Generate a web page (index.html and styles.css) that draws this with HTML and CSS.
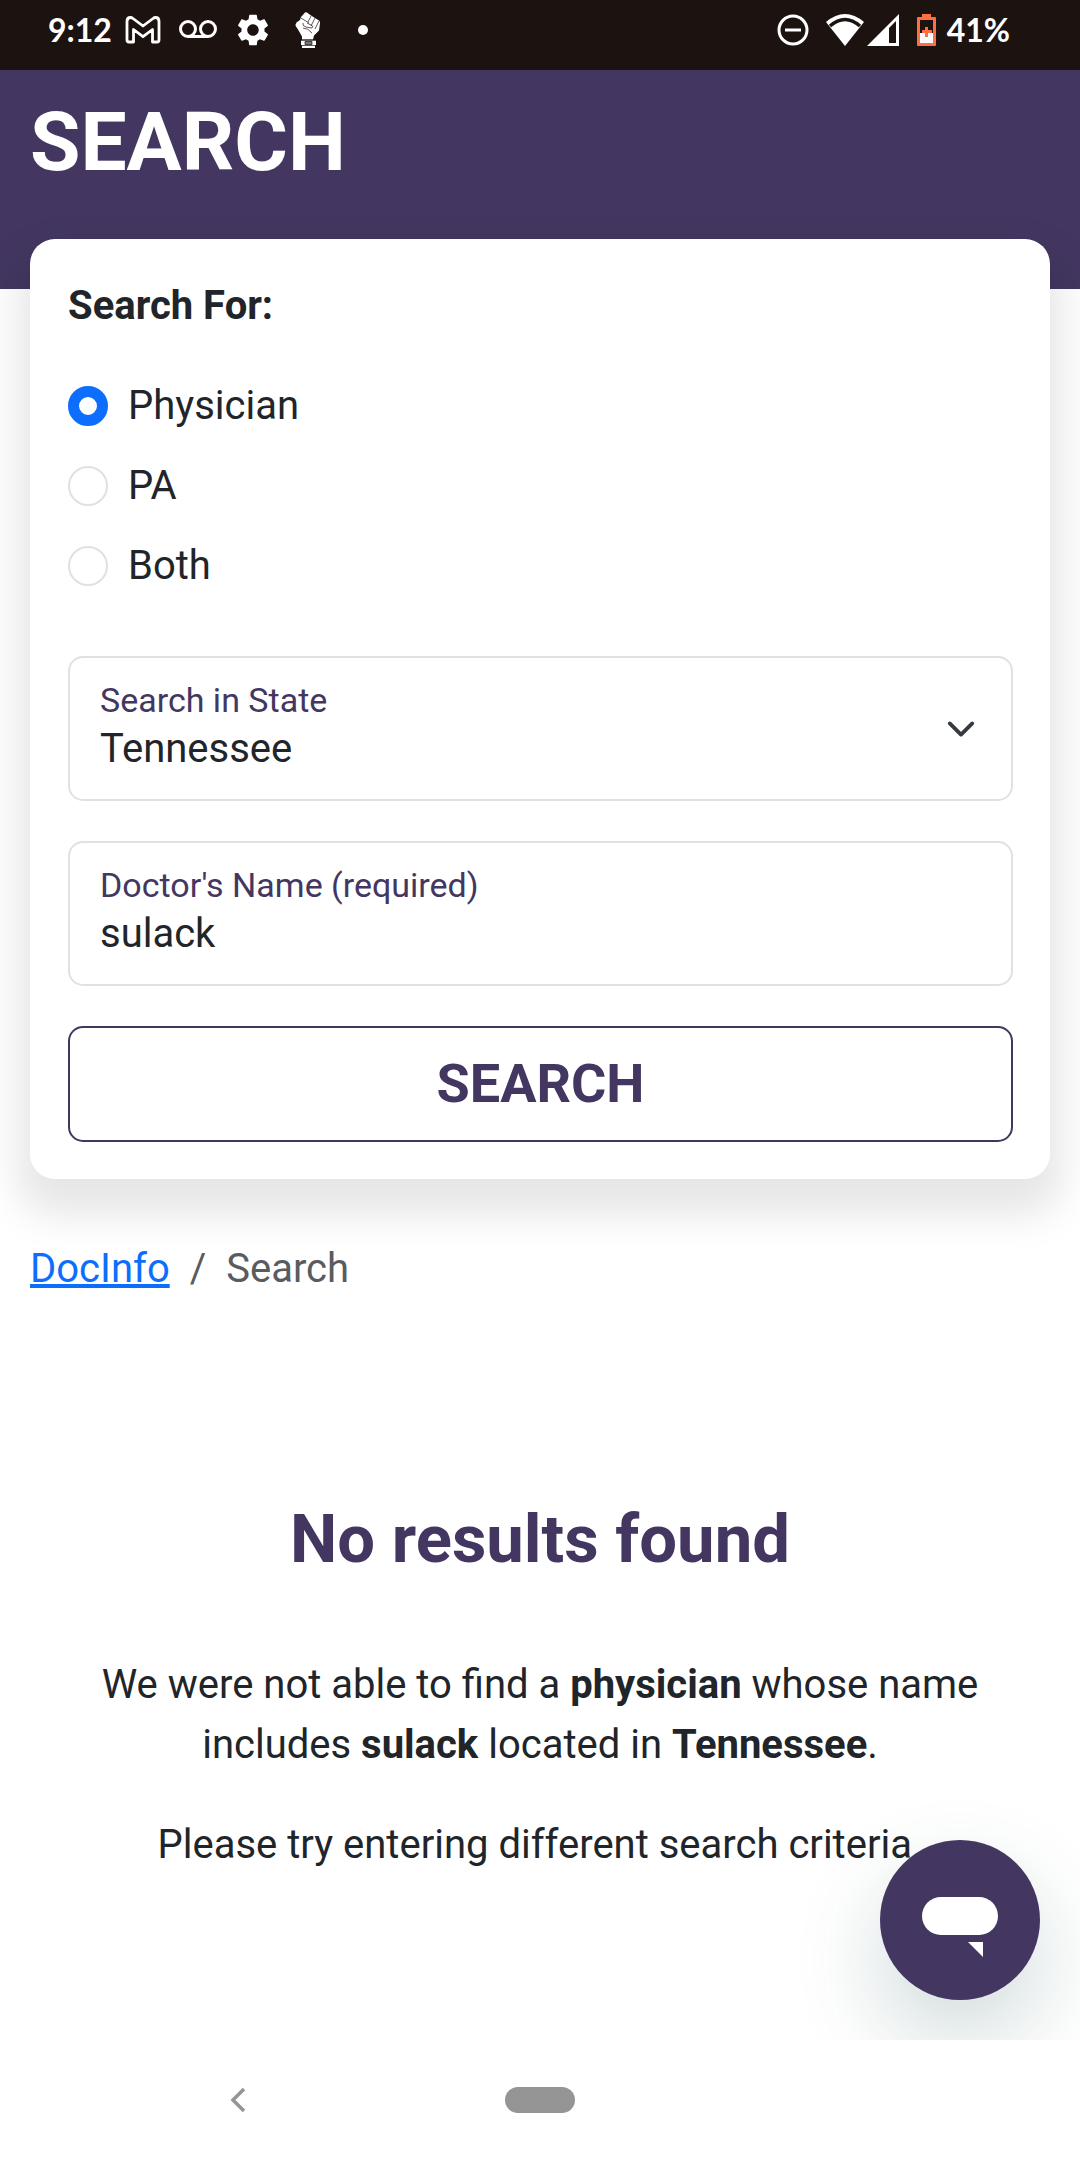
FILE: index.html
```html
<!DOCTYPE html>
<html lang="en">
<head>
    <meta charset="UTF-8">
    <meta name="viewport" content="width=device-width, initial-scale=1.0">
    <title>Search - DocInfo</title>
    <link rel="stylesheet" href="styles.css">
</head>
<body>
    <!-- Status Bar -->
    <div class="status-bar">
        <div class="status-left">
            <span class="clock">9:12</span>
            <svg class="status-icon" viewBox="0 0 40 40" fill="none" stroke="#fff" stroke-width="2.800" stroke-linejoin="round">
                <path d="M4 11.500V30q0 2 2 2h4.500V19.500L20 26.700l9.500-7.200V32H34q2 0 2-2V11.500q0-4-3.500-4-1.300 0-2.500 1L20 16l-10-7.500q-1.200-1-2.500-1Q4 7.500 4 11.500z"/>
            </svg>
            <svg class="status-icon" viewBox="0 0 40 40" fill="none" stroke="#fff" stroke-width="3">
                <circle cx="10" cy="19" r="7.500"/>
                <circle cx="30" cy="19" r="7.500"/>
                <path d="M10 26.500h20"/>
            </svg>
            <svg class="status-icon" viewBox="-0.500 -0.500 25 25" fill="#fff">
                <path d="M19.140 12.940c.04-.3.06-.61.06-.94 0-.32-.02-.64-.07-.94l2.030-1.580c.18-.14.23-.41.12-.61l-1.920-3.320c-.12-.22-.37-.29-.59-.22l-2.390.96c-.5-.38-1.030-.7-1.620-.94l-.36-2.540c-.04-.24-.24-.41-.48-.41h-3.840c-.24 0-.43.17-.47.41l-.36 2.540c-.59.24-1.130.57-1.620.94l-2.390-.96c-.22-.08-.47 0-.59.22L2.740 8.870c-.12.21-.08.47.12.61l2.030 1.580c-.05.3-.09.63-.09.94s.02.64.07.94l-2.030 1.580c-.18.14-.23.41-.12.61l1.920 3.320c.12.22.37.29.59.22l2.390-.96c.5.38 1.030.7 1.620.94l.36 2.540c.05.24.24.41.48.41h3.840c.24 0 .44-.17.47-.41l.36-2.540c.59-.24 1.130-.56 1.620-.94l2.390.96c.22.08.47 0 .59-.22l1.920-3.320c.12-.22.07-.47-.12-.61l-2.010-1.580zM12 15.600c-1.980 0-3.600-1.620-3.600-3.600s1.620-3.600 3.600-3.600 3.600 1.620 3.600 3.600-1.620 3.600-3.600 3.600z"/>
            </svg>
            <svg class="status-icon" viewBox="0 0 40 40" fill="#fff" stroke="#1c1311" stroke-width="0.700">
                <path stroke="none" d="M13 7l4-4.500q1-.5 2 0l4 3 4 2.500 4 2.500q1.500 1 1 3l-1 7-5 5-1 4H14v-3l-4-7-2-3q-1-2 .5-4L12 10z"/>
                <path fill="none" d="M13 8l8 5M23 6l-3 6M27 8l-4 8M31 11l-4 8M15 13q-1 3 3 4l6 1q2-2-1-3l-4-2M15 18q5 0 9 5"/>
                <path stroke="none" d="M13 30.500h15v4.500h-1v3H14v-3h-1z"/>
                <path fill="#777" d="M17 31.500h7v3h-7z"/>
                <path fill="none" d="M13 35.500h15M13 30h15"/>
            </svg>
            <svg class="status-icon" viewBox="0 0 40 40" fill="#fff">
                <circle cx="20" cy="20" r="5"/>
            </svg>
        </div>
        <div class="status-right">
            <svg class="icon-dnd" viewBox="0 0 32 32" fill="none" stroke="#fff" stroke-width="3">
                <circle cx="16" cy="16" r="14"/>
                <path d="M8 16h16"/>
            </svg>
            <svg class="icon-wifi" viewBox="0 0 38 32">
                <path fill="#fff" d="M0 8Q19-8 38 8L19 32z"/>
                <path fill="none" stroke="#1c1311" stroke-width="3.500" d="M4 12Q19-1 34 12"/>
            </svg>
            <svg class="icon-signal" viewBox="0 0 32 32">
                <path fill="#fff" d="M0 32L32 0v32z"/>
                <path fill="#1c1311" d="M22 14l7-7v22h-7z"/>
            </svg>
            <svg class="icon-battery" viewBox="0 0 20 32">
                <path fill="#ff6e40" d="M5 0h9v3h4q1 0 1 1v27q0 1-1 1H1q-1 0-1-1V4q0-1 1-1h4z"/>
                <path fill="#1c1311" d="M3 6h13v13H3z"/>
                <path fill="#fff" d="M3 19h13v10H3z"/>
                <path fill="#ff6e40" d="M8 13h3v3h4v3h-4v4H8v-4H5v-3h3z"/>
            </svg>
            <span class="battery-level">41%</span>
        </div>
    </div>

    <div class="page">
        <header class="page-header">
            <h1>SEARCH</h1>
        </header>

        <!-- Search Form -->
        <form class="search-card" id="search-form">
            <fieldset class="search-for">
                <legend>Search For:</legend>
                <div class="form-check">
                    <input type="radio" name="type" id="type-physician" value="physician" checked>
                    <label for="type-physician">Physician</label>
                </div>
                <div class="form-check">
                    <input type="radio" name="type" id="type-pa" value="pa">
                    <label for="type-pa">PA</label>
                </div>
                <div class="form-check">
                    <input type="radio" name="type" id="type-both" value="both">
                    <label for="type-both">Both</label>
                </div>
            </fieldset>

            <div class="form-field">
                <label for="state">Search in State</label>
                <select id="state" name="state">
                    <option selected>Tennessee</option>
                </select>
                <svg class="chevron" viewBox="0 0 16 16" fill="none" stroke="#343a40" stroke-width="2" stroke-linecap="round" stroke-linejoin="round">
                    <path d="m2 5 6 6 6-6"/>
                </svg>
            </div>

            <div class="form-field">
                <label for="doctor-name">Doctor's Name (required)</label>
                <input type="text" id="doctor-name" name="doctor-name" value="sulack" required>
            </div>

            <button type="submit" class="search-button">SEARCH</button>
        </form>

        <nav class="breadcrumb">
            <a href="#">DocInfo</a>
            <span>/</span>
            <span>Search</span>
        </nav>

        <!-- Results -->
        <main class="results">
            <h2>No results found</h2>
            <p>We were not able to find a <strong>physician</strong> whose name includes <strong>sulack</strong> located in <strong>Tennessee</strong>.</p>
            <p>Please try entering different search criteria.</p>
        </main>

        <button type="button" class="chat-button" aria-label="Chat">
            <svg viewBox="0 0 160 160" fill="#fff">
                <rect x="42" y="57" width="76" height="38" rx="19"/>
                <path d="M88 102h15v15z"/>
            </svg>
        </button>
    </div>

    <!-- Navigation Bar -->
    <div class="nav-bar">
        <button type="button" class="nav-back" aria-label="Back">
            <svg viewBox="0 0 16 26" fill="none" stroke="#959595" stroke-width="3.500">
                <path d="M14 2L3 13l11 11"/>
            </svg>
        </button>
        <button type="button" class="nav-home" aria-label="Home"></button>
    </div>
</body>
</html>
```
FILE: styles.css
```css
* {
    box-sizing: border-box;
}

body {
    font-family: Roboto, sans-serif;
    font-size: 40px;
    line-height: 60px;
    color: #212529;
    background: #fff;
    margin: 0;
    display: flex;
    flex-direction: column;
    min-height: 100vh;
}

button,
input,
select {
    font-family: inherit;
    font-size: inherit;
    color: inherit;
    margin: 0;
}

svg {
    display: block;
}

/* Status bar */
.status-bar {
    display: flex;
    justify-content: space-between;
    background: #1c1311;
    color: #fff;
    font-family: Lato, sans-serif;
    font-size: 32px;
    font-weight: 700;
    padding: 0 70px 10px 48px;
}

.status-left,
.status-right {
    display: flex;
    align-items: center;
}

.clock {
    margin-right: 11px;
}

.status-icon {
    width: 40px;
    height: 40px;
    margin-right: 15px;
}

.icon-dnd {
    width: 32px;
    height: 32px;
    margin-right: 17px;
}

.icon-wifi {
    width: 38px;
    height: 32px;
    margin-right: 3px;
}

.icon-signal {
    width: 32px;
    height: 32px;
    margin-right: 18px;
}

.icon-battery {
    width: 20px;
    height: 32px;
    margin-right: 10px;
}

/* Page */
.page {
    flex: 1;
    position: relative;
    overflow: hidden;
}

.page-header {
    background: #433761;
    color: #fff;
    padding: 24px 30px 99px;
}

.page-header h1 {
    font-size: 82px;
    line-height: 96px;
    font-weight: 700;
    margin: 0;
}

.search-card {
    position: relative;
    background: #fff;
    border-radius: 25px;
    box-shadow: 0 24px 40px 12px rgba(0, 0, 0, 0.1);
    padding: 37px;
    padding-left: 38px;
    margin: -50px 30px 60px;
    display: flex;
    flex-direction: column;
    gap: 40px;
}

.search-for {
    border: none;
    padding: 0;
    margin: 0 0 20px;
    display: flex;
    flex-direction: column;
    gap: 20px;
}

.search-for legend {
    font-weight: 700;
    padding: 0;
    margin-bottom: 40px;
}

.form-check {
    display: flex;
    align-items: center;
    gap: 20px;
}

.form-check input {
    appearance: none;
    width: 40px;
    height: 40px;
    border: 2px solid #dee2e6;
    border-radius: 50%;
    background: #fff;
}

.form-check input:checked {
    border: 11px solid #0d6efd;
}

.form-field {
    position: relative;
    display: flex;
    flex-direction: column;
    border: 2px solid #dee2e6;
    border-radius: 15px;
    padding: 19px 30px 24px;
}

.form-field label {
    font-size: 34px;
    line-height: 46px;
    color: #433761;
}

.form-field input,
.form-field select {
    appearance: none;
    width: 100%;
    height: 52px;
    line-height: 52px;
    border: none;
    outline: none;
    background: none;
    padding: 0;
}

.chevron {
    position: absolute;
    right: 35px;
    top: 56px;
    width: 30px;
    height: 30px;
    pointer-events: none;
}

.search-button {
    background: #fff;
    border: 2px solid #433761;
    border-radius: 15px;
    color: #433761;
    font-size: 54px;
    line-height: 80px;
    font-weight: 700;
    padding: 16px;
}

.breadcrumb {
    display: flex;
    gap: 20px;
    padding: 0 30px;
    color: #595c5f;
}

.breadcrumb a {
    color: #0d6efd;
}

/* Results */
.results {
    padding: 200px 80px 0;
    text-align: center;
}

.results h2 {
    font-size: 67px;
    line-height: 80px;
    font-weight: 700;
    color: #433761;
    margin: 0 0 76px;
}

.results p {
    margin: 0 0 40px;
}

.chat-button {
    position: absolute;
    right: 40px;
    bottom: 40px;
    width: 160px;
    height: 160px;
    border: none;
    border-radius: 50%;
    background: #433761;
    box-shadow: 0 40px 90px rgba(23, 73, 77, 0.2);
    padding: 0;
}

/* Navigation bar */
.nav-bar {
    display: grid;
    grid-template-columns: 1fr 70px 1fr;
    align-items: center;
    height: 120px;
}

.nav-bar button {
    border: none;
    background: none;
    padding: 0;
}

.nav-bar .nav-back {
    justify-self: center;
    margin-right: 30px;
}

.nav-back svg {
    width: 16px;
    height: 26px;
}

.nav-bar .nav-home {
    height: 26px;
    border-radius: 13px;
    background: #959595;
}
```
